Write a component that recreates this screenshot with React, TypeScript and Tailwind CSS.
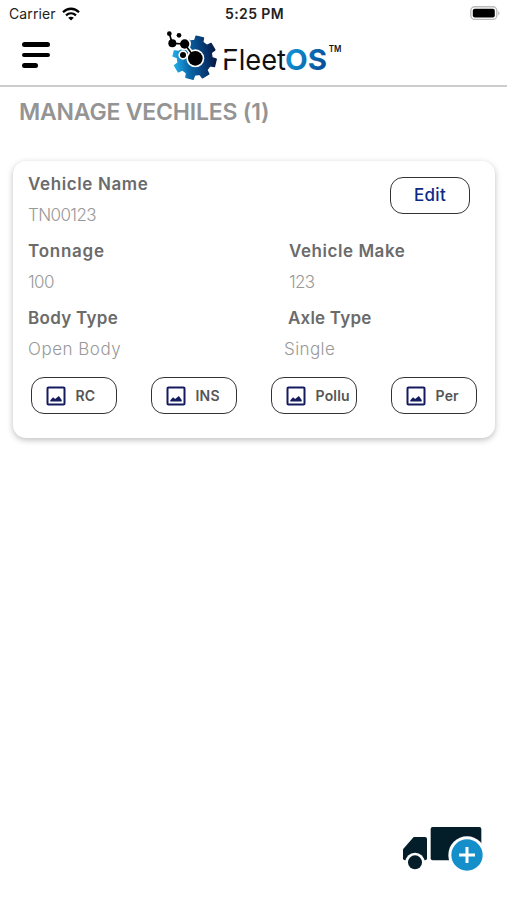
import clsx from "clsx"

interface Field {
    label: string
    value: string
    labelClass?: string
    valueClass?: string
}

const fields: Field[] = [
    { label: "Vehicle Name", value: "TN00123", labelClass: "tracking-[0.62px]", valueClass: "tracking-[-0.6px]" },
    { label: "Tonnage", value: "100", labelClass: "tracking-[0.75px]", valueClass: "tracking-[-0.6px]" },
    { label: "Vehicle Make", value: "123", labelClass: "tracking-[0.55px]", valueClass: "tracking-[-0.7px]" },
    { label: "Body Type", value: "Open Body", labelClass: "tracking-[0.3px]", valueClass: "tracking-[0.5px]" },
    { label: "Axle Type", value: "Single", labelClass: "-ml-px tracking-[0.2px]", valueClass: "-ml-[5px] tracking-[0.4px]" },
]

const documents = ["RC", "INS", "Pollu", "Per"]

// Cog outline with eight teeth, drawn around cx / cy
function gearPath(cx: number, cy: number, outer: number, inner: number) {
    const points: string[] = []
    for (let i = 0; i < 8; i++) {
        const middle = -76 + i * 45
        const corners = [
            [-14, inner],
            [-10, outer],
            [10, outer],
            [14, inner],
        ]
        corners.forEach(([offset, radius]) => {
            const angle = ((middle + offset) * Math.PI) / 180
            points.push(`${(cx + radius * Math.cos(angle)).toFixed(1)} ${(cy + radius * Math.sin(angle)).toFixed(1)}`)
        })
    }
    return `M${points.join("L")}Z`
}

function StatusBar() {
    return (
        <div className="grid h-[27px] grid-cols-[1fr_auto_1fr] items-center pr-[7px] pl-[9px] text-[14px] text-[#222]">
            <div className="flex items-center gap-[6px]">
                <span className="tracking-[0.1px]">Carrier</span>
                <svg width="18" height="14" viewBox="0 0 18 14" fill="none" stroke="#000" strokeWidth="2.3">
                    <path d="M1 5.2C5.6.6 12.4.6 17 5.2" />
                    <path d="M4 8.3c3-2.7 7-2.7 10 0" />
                    <path d="M9 13.6 6.2 10.8c1.7-1.4 3.9-1.4 5.6 0Z" fill="#000" stroke="none" />
                </svg>
            </div>
            <span className="font-semibold tracking-[0.4px]">5:25 PM</span>
            <svg className="justify-self-end" width="30" height="15" viewBox="0 0 30 15">
                <rect x="0.8" y="0.8" width="26" height="12.6" rx="4" fill="#fff" stroke="#bbb" strokeWidth="1.4" />
                <rect x="2.8" y="2.7" width="22" height="8.8" rx="2" fill="#000" />
                <path d="M28.2 5v4.4c1.8-.7 1.8-3.7 0-4.4Z" fill="#bbb" />
            </svg>
        </div>
    )
}

function Logo() {
    return (
        <svg width="200" height="60" viewBox="0 0 600 180" fontFamily="Inter, sans-serif">
            <defs>
                <linearGradient id="gear" x1="0" y1="0.55" x2="1" y2="0.45">
                    <stop offset="0" stopColor="#22b0ec" />
                    <stop offset="0.35" stopColor="#0b67a8" />
                    <stop offset="0.75" stopColor="#07366f" />
                    <stop offset="1" stopColor="#06183f" />
                </linearGradient>
                <linearGradient id="os" x1="0" y1="0" x2="1" y2="0.3">
                    <stop offset="0" stopColor="#149fe0" />
                    <stop offset="1" stopColor="#07529b" />
                </linearGradient>
            </defs>
            <path d={gearPath(119, 98, 65, 52)} fill="url(#gear)" stroke="url(#gear)" strokeWidth="4" strokeLinejoin="round" />
            <path d="M40 20h62v24l-14 26-18 7-40-6Z" fill="#fff" />
            <g fill="#fff" stroke="#fff" strokeWidth="10">
                <circle cx="89" cy="57" r="14" />
                <circle cx="84" cy="90" r="9" />
                <circle cx="121" cy="100" r="22" />
                <path d="M89 57 121 100" strokeWidth="14" />
            </g>
            <path d="M43 26 52 55 89 57 119 98" fill="none" stroke="#000" strokeWidth="5" />
            <circle cx="43" cy="26" r="7" />
            <circle cx="72" cy="31" r="7" />
            <circle cx="52" cy="55" r="12" />
            <circle cx="89" cy="57" r="14" />
            <circle cx="84" cy="90" r="9" />
            <circle cx="121" cy="100" r="22" />
            <text x="201" y="136" fontSize="84" fontWeight="400" fill="#111" textLength="50" lengthAdjust="spacingAndGlyphs">F</text>
            {/* The stem of the F stops at its middle bar */}
            <rect x="200" y="83" width="22" height="17" fill="#fff" />
            <text x="251" y="136" fontSize="84" fontWeight="400" fill="#111" textLength="142" lengthAdjust="spacingAndGlyphs">leet</text>
            <text x="390" y="136" fontSize="86" fontWeight="700" fill="url(#os)" textLength="126" lengthAdjust="spacingAndGlyphs">OS</text>
            <text x="521" y="80" fontSize="25" fontWeight="600" fill="#111" textLength="38" lengthAdjust="spacingAndGlyphs">TM</text>
        </svg>
    )
}

function Header() {
    return (
        <header className="flex h-[60px] items-start border-b-2 border-[#ccc]">
            <button className="mt-[15px] ml-[22px] flex w-[28px] flex-col gap-[6px]" aria-label="Menu">
                <span className="h-[4.5px] w-full rounded-full bg-black" />
                <span className="h-[4.5px] w-full rounded-full bg-black" />
                <span className="h-[4.5px] w-4 rounded-full bg-black" />
            </button>
            <div className="-mt-[2px] ml-[105px]">
                <Logo />
            </div>
        </header>
    )
}

function ImageIcon() {
    return (
        <svg className="shrink-0" width="20" height="20" viewBox="0 0 20 20" fill="none">
            <rect x="1.5" y="1.5" width="17" height="17" rx="1" stroke="#141a5e" strokeWidth="2" />
            <path d="M4.3 15.4v-1.2l2.8-2.9 2 1.8 3.8-3.2 2.8 4.2v1.3Z" fill="#141a5e" />
        </svg>
    )
}

function FieldItem({ field }: { field: Field }) {
    return (
        <div className="h-[67px] leading-[30px] whitespace-nowrap">
            <div className={clsx("text-[17px] font-semibold text-[#6b6b6b]", field.labelClass)}>{field.label}</div>
            <div className={clsx("pt-px text-[17px] font-light text-[#999]", field.valueClass)}>{field.value}</div>
        </div>
    )
}

function VehicleCard() {
    const [name, ...rest] = fields
    return (
        <section className="mx-3 mt-6 ml-[13px] h-[277px] rounded-[13px] bg-white pt-2 pl-[15px] shadow-[0_2px_6px_rgba(0,0,0,0.26)]">
            <div className="flex justify-between pr-[25px]">
                <FieldItem field={name} />
                <button className="mt-2 h-[37px] w-[80px] rounded-[13px] border-[1.5px] border-[#333] text-[17px] font-medium tracking-[0.3px] text-[#0b2a85]">
                    Edit
                </button>
            </div>
            <div className="grid grid-cols-[261px_1fr]">
                {rest.map((field) => (
                    <FieldItem key={field.label} field={field} />
                ))}
            </div>
            <div className="mt-[7px] ml-[3px] flex gap-[34px]">
                {documents.map((name) => (
                    <button
                        key={name}
                        className="flex h-[37px] w-[86px] shrink-0 items-center gap-[10px] rounded-[13px] border-[1.5px] border-[#333] pl-[13.5px] text-[14px] font-semibold tracking-[0.2px] text-[#555]"
                    >
                        <ImageIcon />
                        {name}
                    </button>
                ))}
            </div>
        </section>
    )
}

function AddVehicleButton() {
    return (
        <button className="absolute right-[7px] bottom-[15px]" aria-label="Add vehicle">
            <svg width="110" height="70" viewBox="0 0 330 210">
                <path d="M128 36h140q6 0 6 6v94H128q-6 0-6-6V42q0-6 6-6Z" fill="#041e29" />
                <path d="M71 66h34q6 0 6 6v58q0 6-6 6H45q-6 0-6-6v-27Z" fill="#041e29" />
                <circle cx="75" cy="142" r="29" fill="#fff" />
                <circle cx="75" cy="142" r="21" fill="#041e29" />
                <circle cx="231" cy="120" r="56" fill="#fff" />
                <path d="M178 137h120v30H178Z" fill="#fff" />
                <circle cx="231" cy="120" r="47" fill="#148fc9" />
                <path d="M231 96v48M207 120h48" stroke="#fff" strokeWidth="9" />
            </svg>
        </button>
    )
}

export default function App() {
    return (
        <main className="relative h-[900px] w-full overflow-hidden bg-white font-['Inter',sans-serif]">
            <StatusBar />
            <Header />
            <h1 className="mt-[8px] ml-[19px] h-[42px] text-[23px] leading-[34px] font-semibold tracking-[-0.2px] whitespace-nowrap text-[#949494]">
                MANAGE VECHILES (1)
            </h1>
            <VehicleCard />
            <AddVehicleButton />
        </main>
    )
}
